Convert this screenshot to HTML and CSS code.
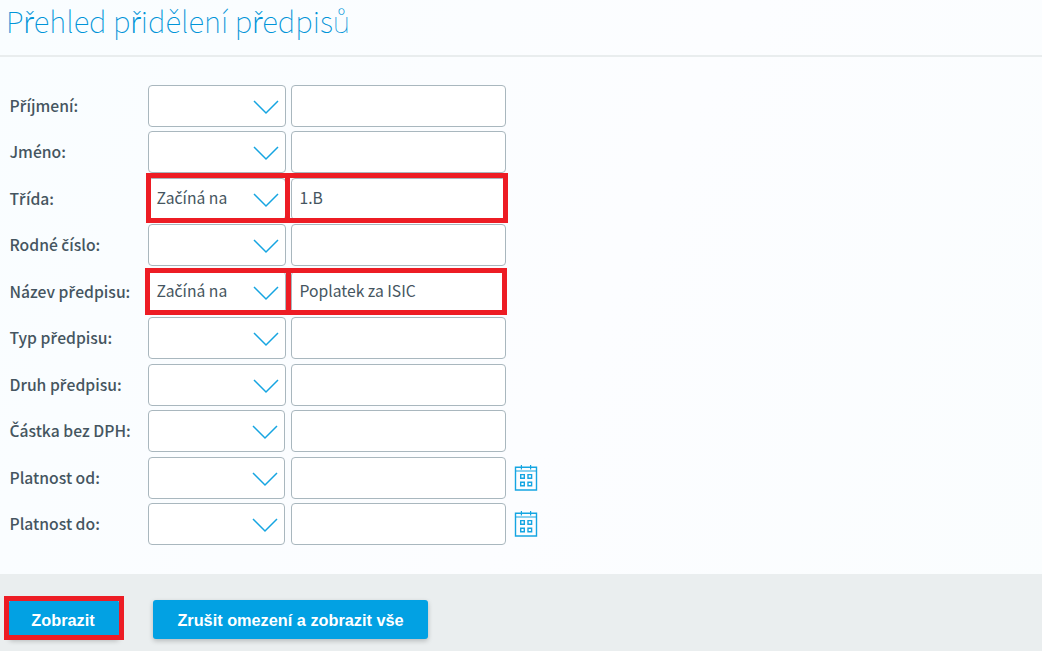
FILE: index.html
```
<!DOCTYPE html>
<html lang="cs">

<head>
    <meta charset="UTF-8">
    <meta name="viewport" content="width=device-width, initial-scale=1.0">
    <title>Přehled přidělení předpisů</title>
    <link rel="stylesheet" href="styles.css">
</head>

<body>
    <header class="page-header">
        <h1>P<span class="cz">ř</span>ehled p<span class="cz">ř</span>idělení p<span class="cz">ř</span>edpisů</h1>
    </header>

    <form class="filter-form">
        <div class="filters" id="filters">
            <!-- Řádky filtru se vykreslí skriptem -->
        </div>

        <div class="actions">
            <div class="action-main">
                <button type="button" class="btn btn-show">Zobrazit</button>
                <div class="mark mark-button"></div>
            </div>
            <button type="button" class="btn btn-reset">Zrušit omezení a zobrazit vše</button>
        </div>
    </form>

    <script src="script.js"></script>
</body>

</html>
```
FILE: styles.css
```
* {
    box-sizing: border-box;
}

body {
    margin: 0;
    height: 651px;
    overflow: hidden;
    display: flex;
    flex-direction: column;
    font-family: "Noto Sans CJK JP", "Noto Sans", sans-serif;
    color: #455560;
    background: linear-gradient(115deg, #f9fdff 0%, #fcfdff 55%, #fafdfe 100%);
}

.page-header {
    height: 57px;
    border-bottom: 2px solid #e9edee;
    padding: 0 6px;
}

h1 {
    margin: 0;
    font-size: 29.4px;
    font-weight: 100;
    line-height: 40px;
    color: #0094d8;
    white-space: nowrap;
}

.cz {
    font-family: Lato, "Open Sans", sans-serif;
    font-size: 1.08em;
    line-height: 1;
}

h1 .cz {
    font-weight: 300;
    font-size: 1.04em;
    letter-spacing: -0.6px;
}

.filter-form {
    flex: 1;
    display: flex;
    flex-direction: column;
}

.filters {
    height: 517px;
    padding: 27.9px 0 0 9.5px;
}

.row {
    position: relative;
    display: flex;
    align-items: flex-start;
    height: 46.5px;
}

.row label {
    width: 138.5px;
    font-size: 15.7px;
    font-weight: 500;
    line-height: 42px;
    white-space: nowrap;
}

.row label .cz {
    font-family: "Open Sans", sans-serif;
    font-weight: 600;
    font-size: 1em;
}

.select-wrap {
    position: relative;
    width: 138px;
    margin-right: 5px;
}

.select-wrap.narrow {
    width: 137px;
    margin-right: 6px;
}

.field {
    display: block;
    width: 100%;
    height: 42px;
    margin: 0;
    padding: 0 7.5px 3px;
    border: 1px solid #a9b7be;
    border-radius: 4px;
    background: #fff;
    color: #455560;
    font-family: inherit;
    font-size: 15.7px;
    line-height: 37px;
    white-space: nowrap;
}

.text-field {
    width: 215px;
    outline: none;
    line-height: normal;
}

.arrow {
    position: absolute;
    right: 7.5px;
    top: 15px;
    width: 26px;
    height: 15px;
    fill: none;
    stroke: #16a5e1;
    stroke-width: 1.5;
    pointer-events: none;
}

.calendar {
    width: 24px;
    height: 27px;
    margin: 7px 0 0 8px;
    fill: none;
    stroke: #14a5e2;
}

/* Červené zvýraznění */
.mark {
    position: absolute;
    border: 5px solid #ed1c24;
    pointer-events: none;
}

.mark-trida {
    left: 136.5px;
    top: -5px;
    width: 362px;
    height: 50px;
}

.mark-nazev {
    left: 135.5px;
    top: -3px;
    width: 362px;
    height: 47px;
}

.mark-trida::after,
.mark-nazev::after {
    content: "";
    position: absolute;
    left: 134px;
    top: 0;
    width: 5px;
    height: 100%;
    background: #ed1c24;
}

.mark-nazev::after {
    left: 136px;
}

.actions {
    flex: 1;
    display: flex;
    align-items: flex-start;
    gap: 34px;
    padding: 26px 0 0 9px;
    background: #eaeeef;
}

.action-main {
    position: relative;
}

.btn {
    display: block;
    height: 39px;
    border: none;
    border-radius: 3px;
    padding: 1px 0 0;
    background: #02a1e3;
    color: #fff;
    font-family: "Liberation Sans", Arial, sans-serif;
    font-size: 16.3px;
    font-weight: bold;
    line-height: 38px;
    box-shadow: 0 2px 5px rgba(0, 0, 0, 0.22);
}

.btn-show {
    width: 110px;
    padding-right: 2px;
}

.btn-reset {
    width: 275px;
}

.mark-button {
    left: -5px;
    top: -4px;
    width: 120px;
    height: 44px;
}
```
FILE: script.js
```
// Definice řádků filtru
const rows = [
    { label: 'Příjmení:' },
    { label: 'Jméno:' },
    { label: 'Třída:', operator: 'Začíná na', value: '1.B', mark: 'mark-trida' },
    { label: 'Rodné číslo:' },
    { label: 'Název předpisu:', operator: 'Začíná na', value: 'Poplatek za ISIC', mark: 'mark-nazev' },
    { label: 'Typ předpisu:' },
    { label: 'Druh předpisu:' },
    { label: 'Částka bez DPH:', narrow: true },
    { label: 'Platnost od:', narrow: true, date: true },
    { label: 'Platnost do:', narrow: true, date: true }
];

const calendarIcon = `
    <svg class="calendar" viewBox="0 0 24 27">
        <path d="M1.5 3.2H22.5V26H1.5Z" stroke-width="1.4"/>
        <path d="M1.5 7H22.5M7.4 1V5.5M16.6 1V5.5" stroke-width="1.2"/>
        <path d="M6.7 10.6h3.6v3.6h-3.6zM14 10.6h3.6v3.6H14zM6.7 18.2h3.6v3.6h-3.6zM14 18.2h3.6v3.6H14z" stroke-width="1.4"/>
    </svg>`;

const filters = document.getElementById('filters');

// Obalí písmena s háčkem, aby použila náhradní font
function wrapCzech(text) {
    return text.replace(/[řčČ]/g, '<span class="cz">$&</span>');
}

rows.forEach((row, index) => {
    const element = document.createElement('div');
    element.className = 'row';

    element.innerHTML = `
        <label for="value-${index}">${wrapCzech(row.label)}</label>
        <div class="select-wrap ${row.narrow ? 'narrow' : ''}">
            <div class="field" role="combobox">${wrapCzech(row.operator || '')}</div>
            <svg class="arrow" viewBox="0 0 26 15"><path d="M1 1L13 13L25 1"/></svg>
        </div>
        <input type="text" class="field text-field" id="value-${index}" value="${row.value || ''}">
        ${row.date ? calendarIcon : ''}
        ${row.mark ? `<div class="mark ${row.mark}"></div>` : ''}
    `;

    filters.appendChild(element);
});
```
